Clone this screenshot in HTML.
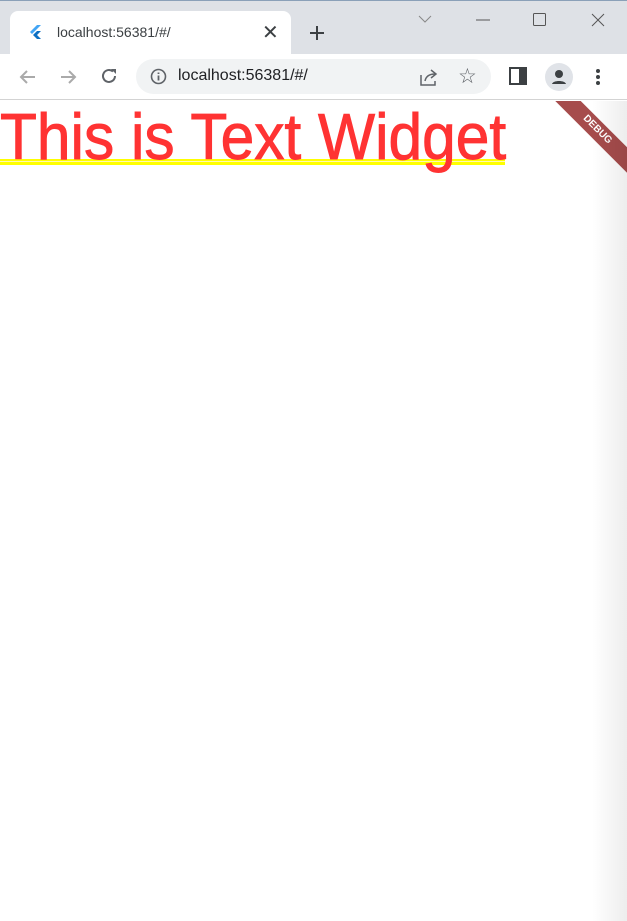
<!DOCTYPE html>
<html><head><style>
*{margin:0;padding:0;box-sizing:border-box}
body{width:627px;height:921px;background:#fff;font-family:"Liberation Sans",sans-serif;position:relative;overflow:hidden}
.top{position:absolute;left:0;top:0;width:627px;height:54px;background:#dee1e6;border-top:1px solid #8aa0b8}
.tab{position:absolute;left:10px;top:11px;width:281px;height:44px;background:#fff;border-radius:8px 8px 0 0}
.tabt{position:absolute;left:57px;top:24px;font-size:14px;color:#3c4043}
.bar{position:absolute;left:0;top:54px;width:627px;height:46px;background:#fff;border-bottom:1px solid #d3d3d3}
.omni{position:absolute;left:136px;top:59px;width:355px;height:35px;background:#f1f3f4;border-radius:18px}
.url{position:absolute;left:178px;top:67px;font-size:16px;color:#202124}
.content{position:absolute;left:0;top:101px;width:627px;height:820px;overflow:hidden}
.big{position:absolute;left:0;top:-2px;font-size:65px;color:#ff3333;transform:scaleX(0.93);transform-origin:0 0;white-space:nowrap;line-height:75px;-webkit-text-stroke:0.9px #ff3333}
.ul{position:absolute;left:0;top:58px;width:505px;height:6px;background:#ffff00}
.ul2{position:absolute;left:0;top:60px;width:505px;height:1px;background:#fffbb0}
.rib{position:absolute;left:542px;top:20px;width:110px;height:18px;background:#a64c4c;transform:rotate(45deg);color:#fff;font-size:10px;font-weight:bold;text-align:center;line-height:18px}
.sh{position:absolute;right:0;top:0;width:35px;height:820px;background:linear-gradient(to right,rgba(0,0,0,0),rgba(0,0,0,0.07))}
.ic{position:absolute;color:#5f6368}
</style></head><body>
<div class="top"></div>
<div class="tab"></div>
<svg class="ic" style="left:29px;top:25px" width="14" height="14" viewBox="0 0 14 14"><path d="M8 0L1 7l2 2 9-9z" fill="#42a5f5"/><path d="M8 6L4 10l4 4h4L8 10l4-4z" fill="#0d6fc2"/></svg>
<div class="tabt">localhost:56381/#/</div>
<div class="ic" style="left:262px;top:20px;font-size:20px;color:#3c4043">✕</div>
<svg style="position:absolute;left:308px;top:24px" width="18" height="18"><path d="M9 2v14M2 9h14" stroke="#3c4043" stroke-width="2"/></svg>
<svg style="position:absolute;left:418px;top:14px" width="14" height="10"><path d="M1 2l6 6 6-6" stroke="#888" fill="none"/></svg>
<svg style="position:absolute;left:476px;top:19px" width="14" height="2"><path d="M0 1h14" stroke="#555"/></svg>
<svg style="position:absolute;left:533px;top:13px" width="14" height="14"><rect x="0.5" y="0.5" width="12" height="12" rx="1" stroke="#555" fill="none"/></svg>
<svg style="position:absolute;left:591px;top:13px" width="14" height="14"><path d="M1 1l12 12M13 1L1 13" stroke="#555"/></svg>
<div class="bar"></div>
<svg style="position:absolute;left:18px;top:67px" width="20" height="20"><path d="M17 10H3M9 4L3 10l6 6" stroke="#aaa" stroke-width="2" fill="none"/></svg>
<svg style="position:absolute;left:58px;top:67px" width="20" height="20"><path d="M3 10h14M11 4l6 6-6 6" stroke="#aaa" stroke-width="2" fill="none"/></svg>
<svg style="position:absolute;left:99px;top:66px" width="20" height="20"><path d="M16 10a6 6 0 1 1-2-4.5" stroke="#5f6368" stroke-width="2" fill="none"/><path d="M12 3h5v5z" fill="#5f6368"/></svg>
<div class="omni"></div>
<svg style="position:absolute;left:150px;top:68px" width="17" height="17"><circle cx="8.5" cy="8.5" r="7" stroke="#5f6368" stroke-width="1.6" fill="none"/><path d="M8.5 7.5v5M8.5 4.5v1.5" stroke="#5f6368" stroke-width="1.8"/></svg>
<div class="url">localhost:56381/#/</div>
<svg style="position:absolute;left:419px;top:67px" width="20" height="20"><path d="M2 8v10h14v-4M6 14c1-5 5-7 10-7M12 3l5 4-5 4" stroke="#5f6368" stroke-width="1.5" fill="none"/></svg>
<div class="ic" style="left:458px;top:64px;font-size:21px">☆</div>
<svg style="position:absolute;left:509px;top:67px" width="18" height="18"><rect x="1" y="1" width="16" height="16" stroke="#3c4043" stroke-width="2" fill="none"/><rect x="10" y="1" width="7" height="16" fill="#3c4043"/></svg>
<svg style="position:absolute;left:544px;top:62px" width="30" height="30"><circle cx="15" cy="15" r="14" fill="#e0e3e8"/><circle cx="15" cy="12" r="4" fill="#3c4043"/><path d="M8 22c1-4 13-4 14 0z" fill="#3c4043"/></svg>
<svg style="position:absolute;left:595px;top:68px" width="6" height="18"><circle cx="3" cy="3" r="2" fill="#3c4043"/><circle cx="3" cy="9" r="2" fill="#3c4043"/><circle cx="3" cy="15" r="2" fill="#3c4043"/></svg>
<div class="content">
<div class="ul"></div><div class="ul2"></div>
<div class="big">This is Text Widget</div>
<div class="rib">DEBUG</div>
<div class="sh"></div>
</div>
</body></html>
